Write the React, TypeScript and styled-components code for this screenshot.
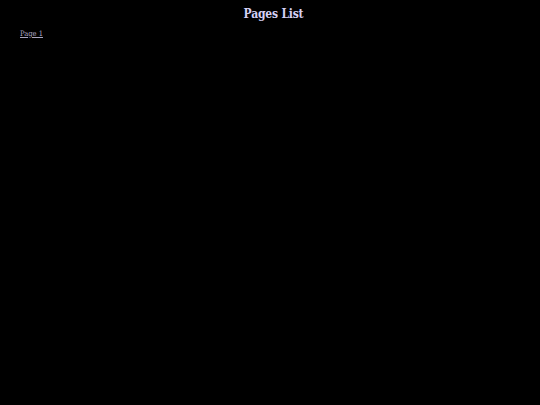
import styled, { createGlobalStyle } from 'styled-components';

const GlobalStyle = createGlobalStyle`
  html, body {
    margin: 0;
    background: #000;
  }
  body {
    font-family: "DejaVu Serif", serif;
    font-stretch: condensed;
  }
`;

const Page = styled.div`
  min-height: 405px;
  background: #000;
  padding: 6px 20px 0;
  box-sizing: border-box;
`;

const Title = styled.h1`
  margin: 0;
  padding-left: 7px;
  text-align: center;
  font-size: 12px;
  line-height: 16px;
  letter-spacing: -0.2px;
  font-weight: bold;
  color: #d4d0f4;
`;

const List = styled.div`
  margin-top: 7px;
  display: flex;
  flex-direction: column;
  align-items: flex-start;
`;

const PageLink = styled.a`
  font-size: 7.5px;
  color: #aaa6c0;
  text-decoration: underline;
`;

function App() {
  return (
    <>
      <GlobalStyle />
      <Page>
        <Title>Pages List</Title>
        <List>
          <PageLink href="#">Page 1</PageLink>
        </List>
      </Page>
    </>
  );
}

export default App;
